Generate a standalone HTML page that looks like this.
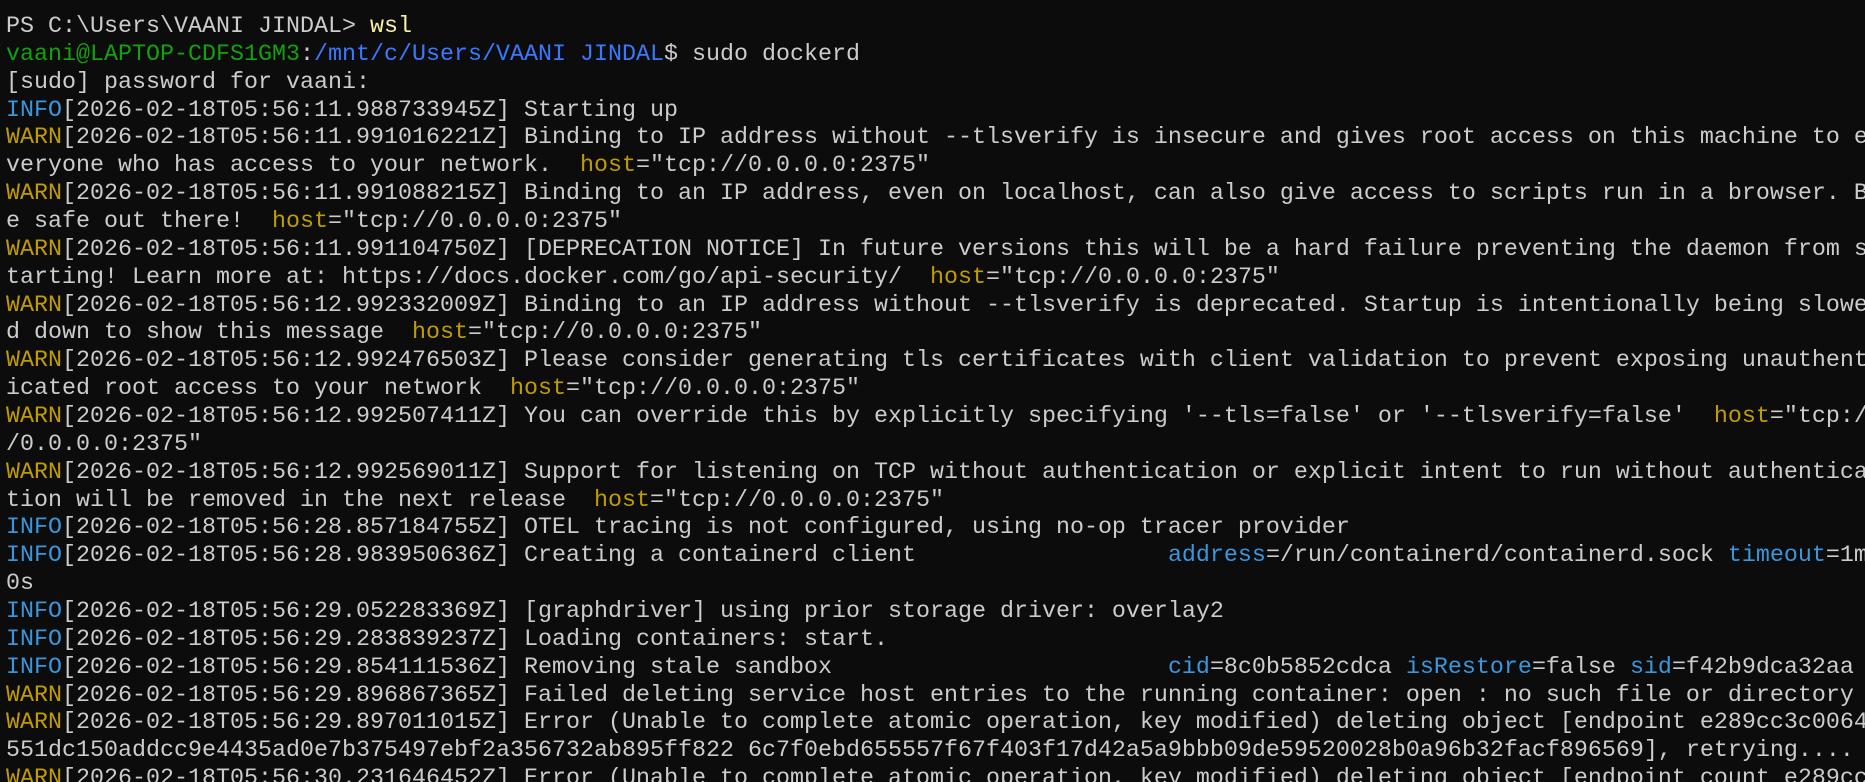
<!DOCTYPE html>
<html><head><meta charset="utf-8"><style>
html,body{margin:0;padding:0;background:#0c0c0c;width:1865px;height:782px;overflow:hidden}
pre{margin:0;padding:14px 0 0 6px;font-family:"Liberation Mono","DejaVu Sans Mono",monospace;font-size:23.33px;line-height:27.86px;color:#cccccc;white-space:pre;overflow:hidden;width:1859px}
.i{color:#3a96dd}.w{color:#c19c00}.g{color:#13a10e}.b{color:#3b78ff}.y{color:#f9f1a5}
</style></head><body><pre>PS C:\Users\VAANI JINDAL&gt; <span class="y">wsl</span>
<span class="g">vaani@LAPTOP-CDFS1GM3</span>:<span class="b">/mnt/c/Users/VAANI JINDAL</span>$ sudo dockerd
[sudo] password for vaani:
<span class="i">INFO</span>[2026-02-18T05:56:11.988733945Z] Starting up
<span class="w">WARN</span>[2026-02-18T05:56:11.991016221Z] Binding to IP address without --tlsverify is insecure and gives root access on this machine to e
veryone who has access to your network.  <span class="w">host</span>="tcp://0.0.0.0:2375"
<span class="w">WARN</span>[2026-02-18T05:56:11.991088215Z] Binding to an IP address, even on localhost, can also give access to scripts run in a browser. B
e safe out there!  <span class="w">host</span>="tcp://0.0.0.0:2375"
<span class="w">WARN</span>[2026-02-18T05:56:11.991104750Z] [DEPRECATION NOTICE] In future versions this will be a hard failure preventing the daemon from s
tarting! Learn more at: https://docs.docker.com/go/api-security/  <span class="w">host</span>="tcp://0.0.0.0:2375"
<span class="w">WARN</span>[2026-02-18T05:56:12.992332009Z] Binding to an IP address without --tlsverify is deprecated. Startup is intentionally being slowe
d down to show this message  <span class="w">host</span>="tcp://0.0.0.0:2375"
<span class="w">WARN</span>[2026-02-18T05:56:12.992476503Z] Please consider generating tls certificates with client validation to prevent exposing unauthent
icated root access to your network  <span class="w">host</span>="tcp://0.0.0.0:2375"
<span class="w">WARN</span>[2026-02-18T05:56:12.992507411Z] You can override this by explicitly specifying '--tls=false' or '--tlsverify=false'  <span class="w">host</span>="tcp:/
/0.0.0.0:2375"
<span class="w">WARN</span>[2026-02-18T05:56:12.992569011Z] Support for listening on TCP without authentication or explicit intent to run without authentica
tion will be removed in the next release  <span class="w">host</span>="tcp://0.0.0.0:2375"
<span class="i">INFO</span>[2026-02-18T05:56:28.857184755Z] OTEL tracing is not configured, using no-op tracer provider
<span class="i">INFO</span>[2026-02-18T05:56:28.983950636Z] Creating a containerd client                  <span class="i">address</span>=/run/containerd/containerd.sock <span class="i">timeout</span>=1m
0s
<span class="i">INFO</span>[2026-02-18T05:56:29.052283369Z] [graphdriver] using prior storage driver: overlay2
<span class="i">INFO</span>[2026-02-18T05:56:29.283839237Z] Loading containers: start.
<span class="i">INFO</span>[2026-02-18T05:56:29.854111536Z] Removing stale sandbox                        <span class="i">cid</span>=8c0b5852cdca <span class="i">isRestore</span>=false <span class="i">sid</span>=f42b9dca32aa
<span class="w">WARN</span>[2026-02-18T05:56:29.896867365Z] Failed deleting service host entries to the running container: open : no such file or directory
<span class="w">WARN</span>[2026-02-18T05:56:29.897011015Z] Error (Unable to complete atomic operation, key modified) deleting object [endpoint e289cc3c0064
551dc150addcc9e4435ad0e7b375497ebf2a356732ab895ff822 6c7f0ebd655557f67f403f17d42a5a9bbb09de59520028b0a96b32facf896569], retrying....
<span class="w">WARN</span>[2026-02-18T05:56:30.231646452Z] Error (Unable to complete atomic operation, key modified) deleting object [endpoint count e289cc3
</pre></body></html>
